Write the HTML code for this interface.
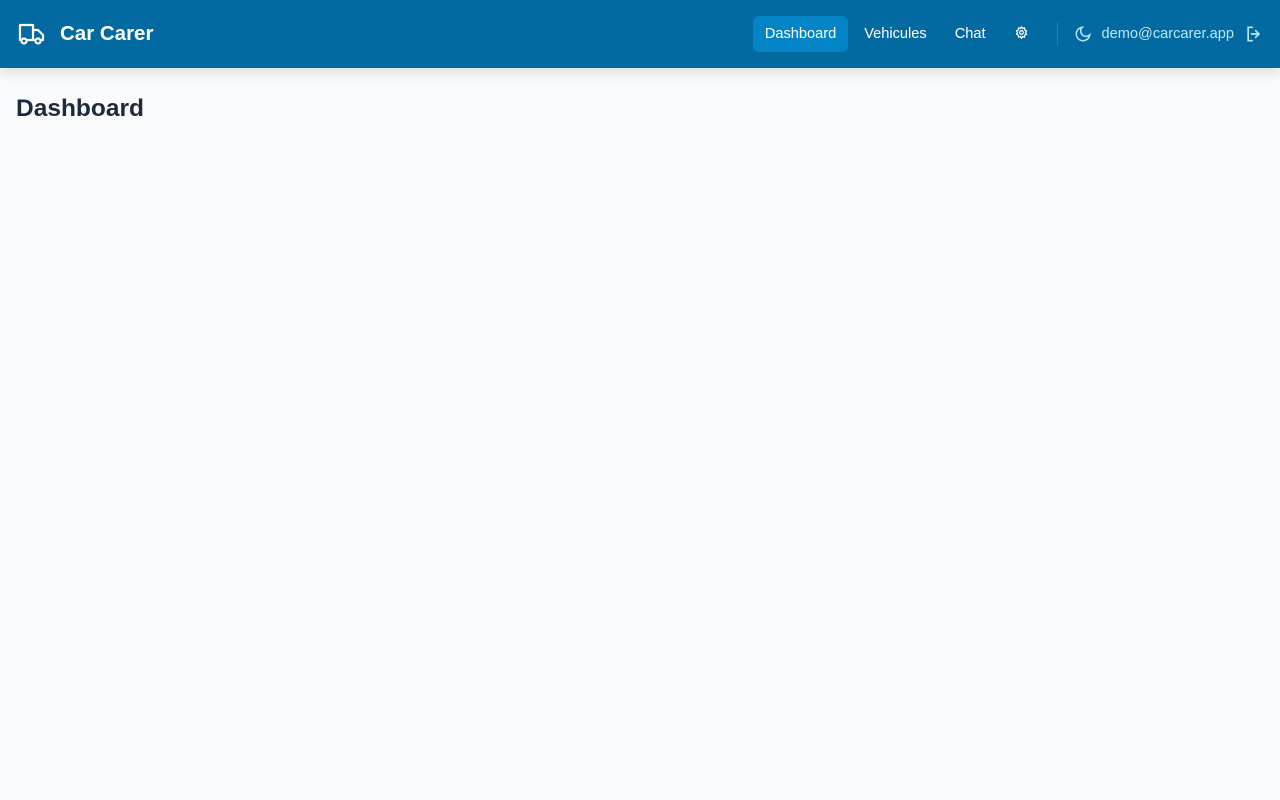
<!DOCTYPE html>
<html><head><meta charset="utf-8"><style>
*{box-sizing:border-box;margin:0;padding:0}
body{width:1280px;height:800px;background:#f8fafc;font-family:"Liberation Sans",sans-serif;overflow:hidden}
header{height:68px;background:#0369a1;display:flex;align-items:center;padding:0 16px 0 18px;box-shadow:0 4px 12px rgba(0,0,0,.12);position:relative}
.logo{display:flex;align-items:center;color:#fff;font-weight:bold;font-size:20.5px;gap:14px}
nav{margin-left:auto;display:flex;align-items:center;gap:4px}
nav a{color:#fff;font-size:14.6px;padding:10px 12px;border-radius:6px;text-decoration:none}
nav a.act{background:#0284c7}
.sep{width:1px;height:24px;background:#1b7fb5;margin:0 12px 0 12px}
.user{display:flex;align-items:center;gap:10px;color:#bae6fd;font-size:14.6px}
h1{font-size:24.5px;color:#1e293b;margin:27px 0 0 16px}
</style></head><body>
<header>
<div class="logo"><svg width="28" height="24" viewBox="0 0 28 24" fill="none" stroke="#fff" stroke-width="2.2" stroke-linejoin="round" stroke-linecap="round"><path d="M2 3h13v15H2z"/><path d="M15 8h5l5 5v5h-10"/><circle cx="6" cy="19" r="2.5" fill="#0369a1"/><circle cx="20" cy="19" r="2.5" fill="#0369a1"/></svg>Car Carer</div>
<nav>
<a class="act">Dashboard</a><a>Vehicules</a><a>Chat</a>
<a><svg width="15" height="15" viewBox="0 0 24 24" fill="none" stroke="#fff" stroke-width="2"><circle cx="12" cy="12" r="3"/><path d="M12 3l1.8 2.6 3-.9.4 3.1 2.8 1.6-1.7 2.6 1.7 2.6-2.8 1.6-.4 3.1-3-.9L12 21l-1.8-2.6-3 .9-.4-3.1L4 14.6l1.7-2.6L4 9.4l2.8-1.6.4-3.1 3 .9z"/></svg></a>
<div class="sep"></div>
<div class="user"><svg width="18" height="18" viewBox="0 0 24 24" fill="none" stroke="#bae6fd" stroke-width="2"><path d="M21 13A9 9 0 1 1 11 3a7 7 0 0 0 10 10z"/></svg>demo@carcarer.app<svg width="20" height="20" viewBox="0 0 24 24" fill="none" stroke="#bae6fd" stroke-width="2" stroke-linecap="round"><path d="M10 4H5v16h5M14 8l4 4-4 4M18 12H9"/></svg></div>
</nav>
</header>
<h1>Dashboard</h1>
</body></html>
